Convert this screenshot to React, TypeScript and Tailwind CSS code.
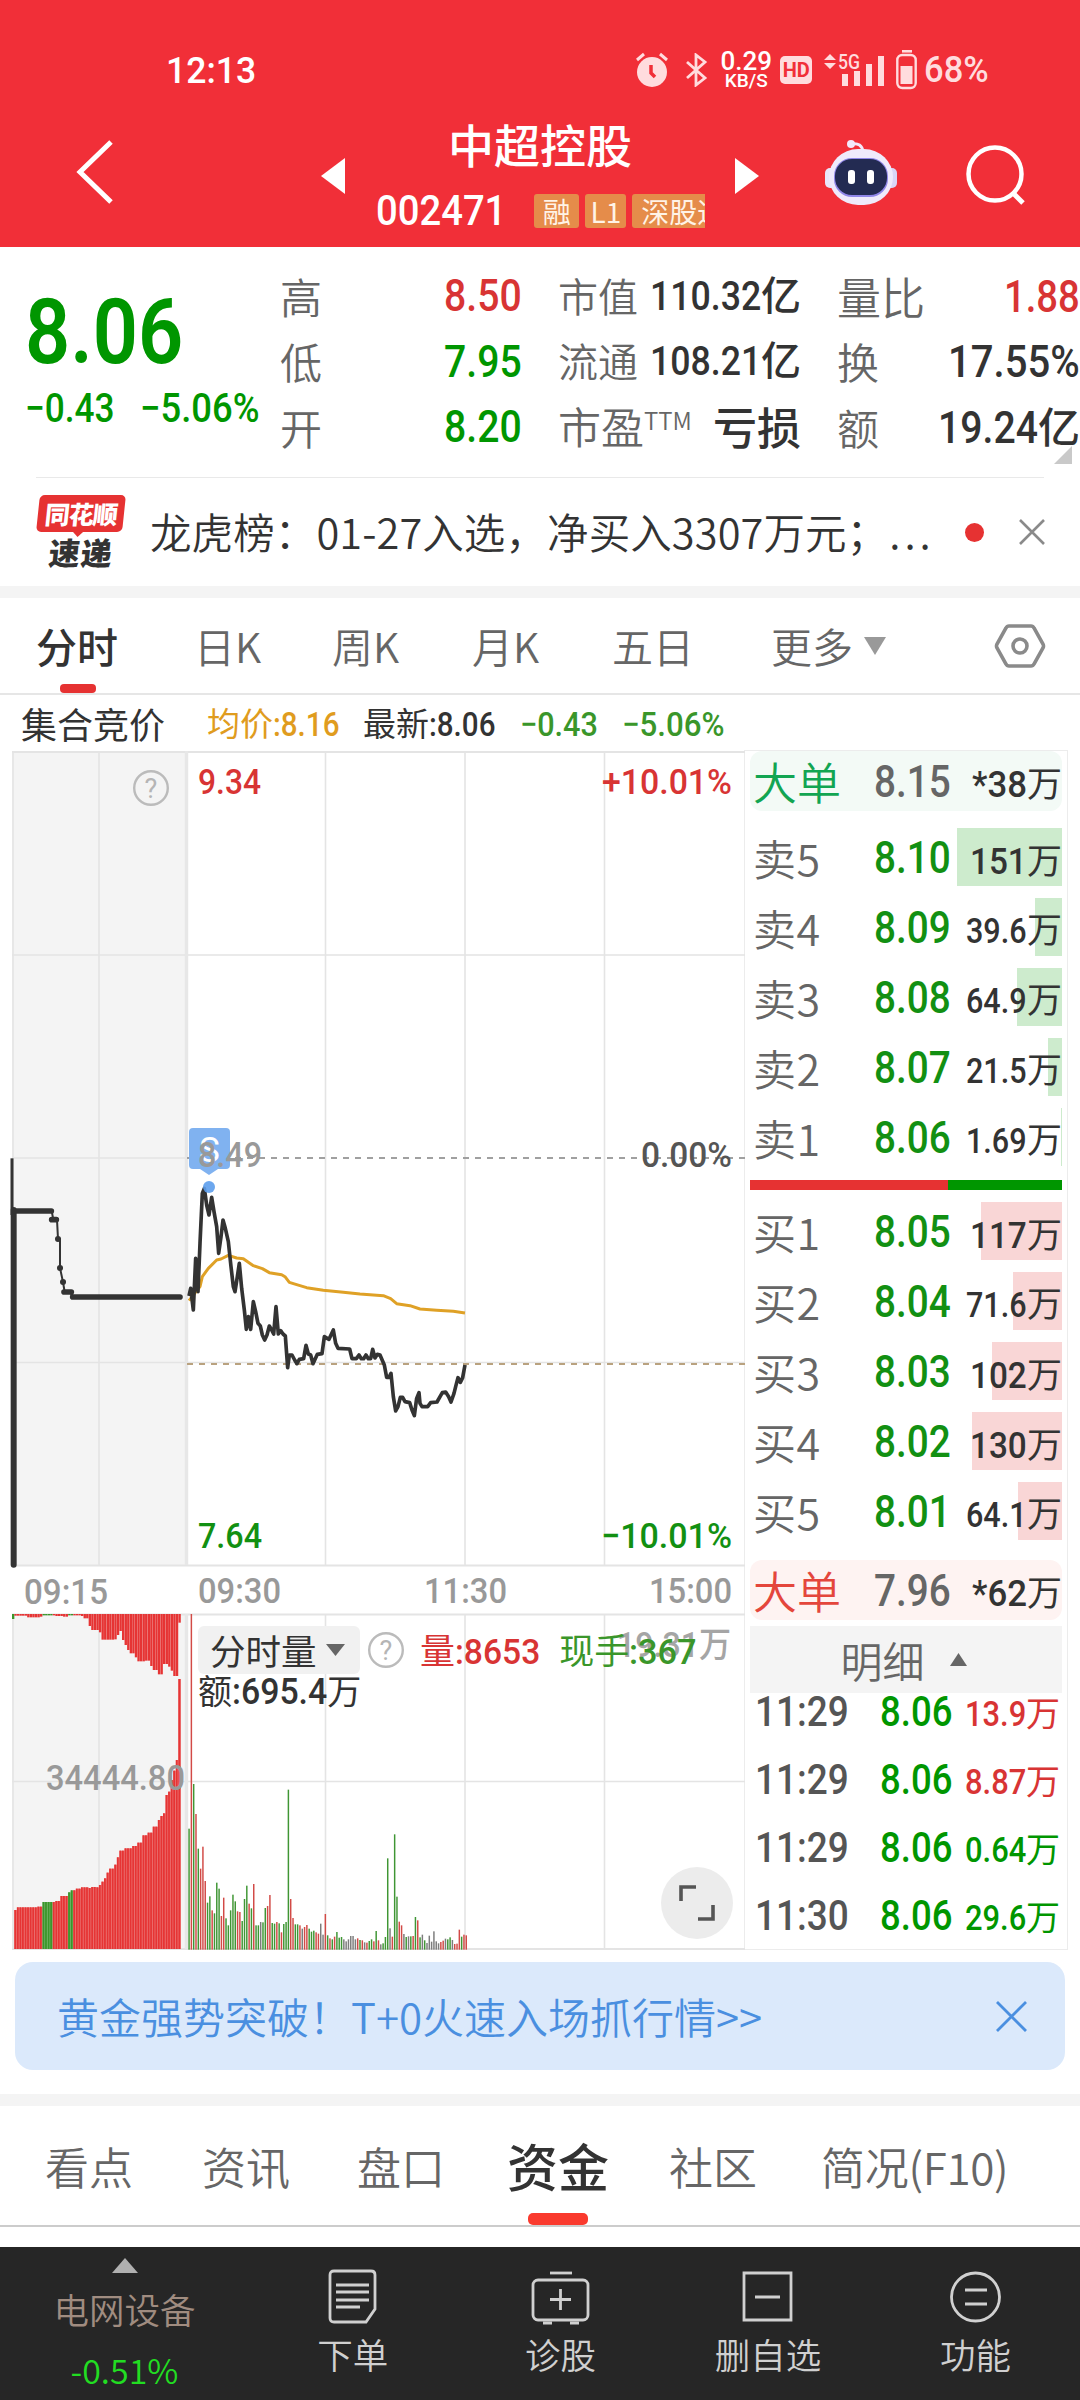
import type { ReactNode } from "react";

const CJK = "font-['Noto_Sans_CJK_SC',sans-serif]";

// Advance widths of Roboto Medium in em, used to close the gap that scaleX leaves behind.
const ADVANCE: Record<string, number> = { ".": 0.28, ":": 0.26, "%": 0.74, "-": 0.33, "*": 0.45, "−": 0.57, "+": 0.56 };

function Num({ children, ratio = 0.87, className = "" }: { children: string; ratio?: number; className?: string }) {
  const width = [...children].reduce((sum, c) => sum + (ADVANCE[c] ?? 0.568), 0);
  return (
    <span
      className={`inline-block origin-left whitespace-nowrap font-['Roboto',sans-serif] font-medium leading-none ${className}`}
      style={{ transform: `scaleX(${ratio})`, marginRight: `${-(1 - ratio) * width}em` }}
    >
      {children}
    </span>
  );
}

export default function App() {
  return (
    <div className={`w-[1080px] h-[2400px] overflow-hidden bg-white text-[#333] flex flex-col ${CJK}`}>
      <Header />
      <Quote />
      <Ticker />
      <div className="h-3 bg-[#f4f4f4] shrink-0" />
      <PeriodTabs />
      <div className="flex h-[1255px] shrink-0">
        <div className="w-[744px] flex flex-col">
          <ChartSummary />
          <Chart />
        </div>
        <OrderBook />
      </div>
      <Promo />
      <div className="h-3 bg-[#f4f4f4] shrink-0" />
      <InfoTabs />
      <BottomNav />
    </div>
  );
}

function Header() {
  return (
    <header className="h-[247px] shrink-0 bg-[#f12f38] text-white flex flex-col">
      <div className="h-[140px] pl-[166px] pr-[91px] flex items-center justify-between">
        <Num ratio={0.96} className="text-[37px]">12:13</Num>
        <StatusIcons />
      </div>
      <div className="h-[107px] flex">
        <div className="w-[321px] pl-[76px] -mt-px">
          <svg width="40" height="66" viewBox="0 0 40 66" fill="none" stroke="#fff" strokeWidth="5">
            <path d="M35 3 4 33l31 30" />
          </svg>
        </div>
        <svg className="w-6 mt-[18px]" height="36" viewBox="0 0 24 36" fill="#fff">
          <path d="M0 18 24 0v36z" />
        </svg>
        <div className="w-[390px] -mt-[24px] flex flex-col">
          <h1 className="h-[54px] text-[46px] leading-[54px] text-center font-medium">中超控股</h1>
          <div className="mt-[24px] pl-[31px] flex items-center h-[34px]">
            <Num ratio={0.91} className="text-[42px]">002471</Num>
            <div className="ml-[28px] flex gap-1.5 w-[171px] h-[34px] overflow-hidden text-[28px] leading-[34px] text-[#fff3e6]">
              <span className="w-[45px] h-[34px] bg-[#e58c4a] rounded-[3px] text-center shrink-0">融</span>
              <span className="w-[41px] h-[34px] bg-[#e58c4a] rounded-[3px] text-center shrink-0">L1</span>
              <span className="w-[110px] h-[34px] bg-[#e58c4a] rounded-[3px] pl-[9px] whitespace-nowrap shrink-0">深股通</span>
            </div>
          </div>
        </div>
        <svg className="w-6 mt-[18px]" height="36" viewBox="0 0 24 36" fill="#fff">
          <path d="M24 18 0 0v36z" />
        </svg>
        <div className="ml-[65px] -mt-[2px]">
          <Robot />
        </div>
        <svg className="ml-[66px] mt-[3px]" width="66" height="66" viewBox="0 0 66 66" fill="none" stroke="#fff" strokeWidth="4.5">
          <circle cx="31" cy="31" r="26.5" />
          <path d="m48 49 11 11" strokeWidth="5" />
        </svg>
      </div>
    </header>
  );
}

function StatusIcons() {
  return (
    <div className="flex items-center text-[#ffdcde]">
      <svg width="34" height="36" viewBox="0 0 34 36" fill="currentColor">
        <path d="M2 8 9 2M32 8l-7-6" stroke="currentColor" strokeWidth="3" />
        <circle cx="17" cy="20" r="15" />
        <path d="M16 13v8l4 4" fill="none" stroke="#f12f38" strokeWidth="3.5" />
      </svg>
      <svg className="ml-4" width="23" height="34" viewBox="0 0 23 34" fill="none" stroke="currentColor" strokeWidth="2.8">
        <path d="M2 9l18 16-9 7V2l9 7L2 25" />
      </svg>
      <div className="ml-3 w-[52px] h-[38px] flex flex-col items-center justify-between text-white">
        <Num ratio={1} className="text-[26px] !leading-5">0.29</Num>
        <Num ratio={1} className="text-[19px] !leading-4">KB/S</Num>
      </div>
      <span className="ml-2 w-8 h-7 rounded-[5px] bg-[#ffdcde] text-[#f12f38] flex justify-center items-center">
        <b className="font-['Roboto',sans-serif] text-[20px] leading-none">HD</b>
      </span>
      <svg className="ml-3" width="62" height="36" viewBox="0 0 62 36" fill="currentColor">
        <path d="M0 8l6-6 6 6zM0 11h12l-6 6z" />
        <text x="14" y="17" fontFamily="Roboto" fontSize="21" fontWeight="500" textLength="22" lengthAdjust="spacingAndGlyphs">5G</text>
        <path d="M18 22h6v12h-6zM30 19h6v15h-6zM42 12h6v22h-6zM54 4h6v30h-6z" />
      </svg>
      <svg className="ml-2.5" width="22" height="40" viewBox="0 0 22 40" fill="currentColor">
        <path d="M6 0h10v2.6H6z" />
        <rect x="1.3" y="5" width="18.4" height="33" rx="5" fill="none" stroke="currentColor" strokeWidth="2.4" />
        <rect x="4.5" y="16" width="12" height="18" />
      </svg>
      <Num ratio={0.96} className="ml-[6px] text-[36px]">68%</Num>
    </div>
  );
}

function Robot() {
  return (
    <svg width="74" height="68" viewBox="0 0 74 68">
      <path d="M27 6q11-2 12 8" fill="none" stroke="#f3e9fb" strokeWidth="3" />
      <circle cx="27" cy="6" r="4" fill="#f3e9fb" />
      <rect x="1" y="30" width="11" height="20" rx="5" fill="#e9e6fa" />
      <rect x="62" y="30" width="11" height="20" rx="5" fill="#d9d5f6" />
      <rect x="5" y="11" width="64" height="56" rx="29" fill="#efeafb" />
      <rect x="10" y="20" width="54" height="39" rx="18" fill="#8f86e8" />
      <rect x="11" y="21" width="52" height="36" rx="17" fill="#232b52" />
      <rect x="24" y="32" width="7" height="14" rx="3" fill="#fff" />
      <rect x="43" y="32" width="7" height="14" rx="3" fill="#fff" />
    </svg>
  );
}

const UP = "text-[#d83434]";
const DOWN = "text-[#009600]";

function Quote() {
  return (
    <section className="h-[231px] shrink-0 flex relative">
      <div className="w-[280px] pl-[25px]">
        <div className={`mt-[39px] h-[92px] flex items-center ${DOWN}`}>
          <Num className="text-[91px] !font-semibold">8.06</Num>
        </div>
        <div className={`mt-[11px] flex gap-[25px] h-10 items-center text-[40px] ${DOWN}`}>
          <Num ratio={0.88}>−0.43</Num>
          <Num ratio={0.91}>−5.06%</Num>
        </div>
      </div>
      <div className="w-[242px] pt-[16px]">
        <Pair label="高"><Num className={`text-[45px] ${UP}`}>8.50</Num></Pair>
        <Pair label="低"><Num className={`text-[45px] ${DOWN}`}>7.95</Num></Pair>
        <Pair label="开"><Num className={`text-[45px] ${DOWN}`}>8.20</Num></Pair>
      </div>
      <div className="ml-[36px] w-[243px] pt-[15px] text-[40px] font-medium">
        <Pair label="市值" size="text-[40px]"><Num className="text-[41px]">110.32</Num>亿</Pair>
        <Pair label="流通" size="text-[40px]"><Num className="text-[41px]">108.21</Num>亿</Pair>
        <Pair
          size="text-[43px]"
          label={<>市盈<sup className="text-[24px] -top-[14px]">TTM</sup></>}
        >
          <span className="text-[44px]">亏损</span>
        </Pair>
      </div>
      <div className="ml-[36px] w-[243px] pt-[16px] text-[42px] font-medium">
        <Pair label="量比" size="text-[44px]"><Num ratio={0.85} className={`text-[45px] ${UP}`}>1.88</Num></Pair>
        <Pair label="换"><Num ratio={0.89} className="text-[45px]">17.55%</Num></Pair>
        <Pair label="额"><Num className="text-[45px]">19.24</Num>亿</Pair>
      </div>
      <svg className="absolute right-2 top-[199px]" width="18" height="18" fill="#c9c9c9">
        <path d="M18 0v18H0z" />
      </svg>
      <div className="absolute left-9 right-9 bottom-0 h-px bg-[#e9e9e9]" />
    </section>
  );
}

function Pair({ label, size = "text-[42px]", children }: { label: ReactNode; size?: string; children: ReactNode }) {
  return (
    <div className="h-[65.5px] flex items-center justify-between leading-none whitespace-nowrap">
      <span className={`${size} font-[350] text-[#666]`}>{label}</span>
      <span>{children}</span>
    </div>
  );
}

function Ticker() {
  return (
    <section className="h-[108px] shrink-0 flex items-center pl-9 pr-9">
      <div className="w-[90px] shrink-0 -mt-[2px] flex flex-col items-center">
        <div className="relative w-[86px] h-[37px] bg-[#e63232] rounded-[5px] -skew-x-6 text-white text-[25px] font-black leading-[36px] text-center tracking-[-1px]">
          同花顺
          <span className="absolute left-[36px] -bottom-[5px] border-x-[6px] border-t-[6px] border-x-transparent border-t-[#e63232]" />
        </div>
        <div className="mt-[5px] -skew-x-6 text-[31px] leading-[30px] font-black tracking-[1px]">速递</div>
      </div>
      <p className="ml-[24px] shrink-0 text-[41.5px] leading-none whitespace-nowrap font-[350] w-[780px] tracking-[0.1px]">
        龙虎榜：01-27入选，净买入3307万元；<span className="ml-px tracking-[4px]">...</span>
      </p>
      <span className="ml-[35px] shrink-0 w-[19px] h-[19px] rounded-full bg-[#e63232]" />
      <svg className="ml-[35px] shrink-0" width="26" height="26" stroke="#8a8a8a" strokeWidth="2.6">
        <path d="M1 1 25 25M25 1 1 25" />
      </svg>
    </section>
  );
}

function PeriodTabs() {
  return (
    <nav className="h-[97px] shrink-0 border-b-2 border-[#e6e6e6] flex items-center text-[41px] leading-none font-[350] text-[#666] whitespace-nowrap relative">
      <span className="w-[194px] pl-[36px] font-medium text-[#333]">分时</span>
      <span className="w-[138px]">日K</span>
      <span className="w-[140px]">周K</span>
      <span className="w-[142px]">月K</span>
      <span className="w-[159px] -ml-[2px]">五日</span>
      <span className="w-[92px]">更多</span>
      <svg width="24" height="20" fill="#999">
        <path d="M1 1h22L12 19z" />
      </svg>
      <svg className="ml-[107px]" width="52" height="48" viewBox="0 0 52 48" fill="none" stroke="#8a8a8a" strokeWidth="3.6">
        <path d="M15 4h22q2 0 3 2l9 16q1 2 0 4l-9 16q-1 2-3 2H15q-2 0-3-2L3 26q-1-2 0-4l9-16q1-2 3-2z" />
        <circle cx="26" cy="24" r="7" />
      </svg>
      <span className="absolute left-[60px] bottom-0 w-9 h-[9px] rounded-[4px] bg-[#e63232]" />
    </nav>
  );
}

function ChartSummary() {
  return (
    <div className="h-[56px] shrink-0 pl-[21px] flex items-center text-[33px] leading-none whitespace-nowrap">
      <span className="w-[186px] text-[36px]">集合竞价</span>
      <span className="w-[156px] text-[#e09c1e]">均价<Num ratio={0.87} className="text-[34px]">:8.16</Num></span>
      <span className="w-[157px]">最新<Num ratio={0.87} className="text-[34px]">:8.06</Num></span>
      <span className="w-[102px] text-[#3a962a]"><Num ratio={0.9} className="text-[34px]">−0.43</Num></span>
      <span className="text-[#3a962a]"><Num ratio={0.92} className="text-[34px]">−5.06%</Num></span>
    </div>
  );
}

const PRICE =
  "567,558 572,535 580,600 587,445 594,545 600,400 607,250 613,235 620,285 627,315 635,262 642,305 650,350 656,430 663,380 669,330 676,355 685,395 693,470 700,530 705,545 712,500 718,460 725,535 733,600 739,658 745,620 752,658 760,575 767,605 774,640 781,648 787,675 794,690 801,675 808,648 815,660 821,672 828,590 835,672 842,662 849,672 856,678 863,773 868,735 876,735 884,750 891,761 898,748 911,746 918,706 925,732 932,735 939,761 952,733 966,731 973,680 987,688 1000,660 1007,700 1014,715 1049,717 1056,746 1069,746 1077,735 1084,746 1091,746 1098,735 1105,746 1112,746 1118,718 1125,744 1132,733 1140,735 1153,765 1160,802 1167,802 1173,790 1180,860 1187,903 1194,890 1201,862 1208,862 1215,875 1229,878 1236,900 1243,917 1250,865 1257,848 1260,880 1266,890 1283,890 1292,878 1311,876 1327,848 1337,846 1346,860 1353,876 1362,850 1367,830 1374,803 1381,817 1388,803 1395,765";
const AVERAGE =
  "567,572 600,530 607,500 625,475 650,450 663,447 685,436 710,444 730,446 760,467 787,476 808,488 845,494 855,500 868,517 890,524 920,533 970,541 1030,547 1080,552 1150,557 1172,566 1190,581 1230,587 1260,597 1310,601 1360,604 1395,609";
const AUCTION =
  "40,303 155,303 160,329 171,329 174,387 180,387 180,474 189,516 194,546 212,546 216,561 543,561";

// One bar per minute: colour (g down, r up, x flat) and the top of the bar, in thirds of a pixel.
const VOLUME =
  "g686 r42 g552 r642 g746 r806 r740 r843 g908 g889 r931 g940 g848 g866 r948 r893 g955 g976 g931 g884 g904 r934 r936 g963 g897 g857 r911 g925 r852 g976 g976 x966 g967 g924 r918 r885 g969 g971 r966 g970 r997 g972 g966 g569 r897 r954 g973 g973 r976 x986 r981 r975 g986 g995 g992 r997 r1001 x971 x1004 r942 g1006 r1015 g1018 r1010 g996 g1013 g1011 x1018 x1024 x1018 x1008 x1008 x1018 r1015 g1020 r1021 x1027 r1028 g1023 g1018 r1024 g993 r1021 x1033 g1030 g1011 g775 x985 r1010 g703 g890 r965 r976 x1002 g1011 x1009 g1009 r1008 g951 r961 g1012 x1004 g1021 x1029 x1007 x1025 x994 x1024 x1030 r1026 r1022 x1016 g1018 g1012 x1020 r1032 r1031 r989 g1010 r1004 r1006".split(" ");
const VOLUME_FILL: Record<string, string> = { g: "#3f9634", r: "#d24a46", x: "#7c7c7c" };

// Auction matched volume (rises from the bottom) and unmatched volume (hangs from the top).
const MATCHED = [
  [43, 930], [50, 922], [108, 920], [126, 906], [165, 903], [180, 888], [200, 877], [210, 871], [222, 866], [240, 862],
  [262, 864], [270, 861], [283, 862], [297, 855], [305, 845], [312, 835], [318, 818], [325, 806], [340, 794], [348, 772],
  [356, 752], [370, 745], [395, 738], [410, 728], [423, 706], [440, 698], [455, 680], [470, 660], [478, 648], [488, 640],
  [492, 585], [503, 575], [510, 540], [520, 512], [528, 480], [533, 237],
];
const UNMATCHED = [
  [43, 47], [80, 52], [120, 50], [126, 46], [160, 48], [190, 50], [200, 46], [240, 48], [250, 55], [260, 78],
  [270, 90], [295, 97], [302, 119], [343, 118], [349, 105], [355, 93], [363, 120], [372, 135], [380, 150], [390, 160],
  [400, 172], [410, 184], [435, 182], [445, 198], [455, 210], [470, 223], [485, 228], [490, 192], [500, 200],
  [508, 212], [514, 228], [530, 240],
];

function levelAt(steps: number[][], x: number) {
  let level = steps[0][1];
  for (const [from, value] of steps) if (from <= x + 1) level = value;
  return level;
}

function Label({ x, y, w, fill, children, size = 35.5 }: { x: number; y: number; w: number; fill: string; children: string; size?: number }) {
  return (
    <text x={x} y={y} fill={fill} fontSize={size} fontWeight={500} fontFamily="Roboto, 'Noto Sans CJK SC', sans-serif" textLength={w} lengthAdjust="spacingAndGlyphs">
      {children}
    </text>
  );
}

function Help({ cx, cy }: { cx: number; cy: number }) {
  return (
    <g>
      <circle cx={cx} cy={cy} r="16.8" fill="none" stroke="#bbb" strokeWidth="2.4" />
      <text x={cx} y={cy + 9.5} textAnchor="middle" fontFamily="Roboto" fontSize="27" fill="#b5b5b5">?</text>
    </g>
  );
}

function Chart() {
  const auctionBars = Array.from({ length: 65 }, (_, i) => 43 + i * 7.69);
  return (
    <div className="relative h-[1199px]">
      <svg width="745" height="1200" viewBox="0 751 745 1200" className="block max-w-none overflow-visible">
        <path d="M12 751h175v814H12zM12 1614h175v335H12z" fill="#f4f4f4" />
        <g stroke="#e4e4e4" strokeWidth="1.6" fill="none">
          <path d="M12 752h733M12 1565.5h733M12 1614.5h733M12 1949h733" strokeWidth="2" />
          <path d="M12 955h733M12 1158h175M12 1362.5h733M12 1781.5h733" />
          <path d="M13 751v814M99 751v814M325.5 751v814M465 751v814M604.5 751v814" />
          <path d="M13 1614v335M99 1614v335M325.5 1614v335M465 1614v335M604.5 1614v335" />
          <path d="M186.5 751v814M186.5 1614v335" strokeWidth="3.4" stroke="#e7e7e7" />
        </g>
        <g strokeWidth="2" strokeDasharray="6 6" fill="none">
          <path d="M187 1158h558" stroke="#a0a0a0" />
          <path d="M187 1364h558" stroke="#b9a27f" />
        </g>

        <g transform="translate(0 1110) scale(.33333)" fill="none" strokeLinejoin="round">
          <path d="M36 145v170" stroke="#333" strokeWidth="9" />
          <path d="M41 300v1064" stroke="#333" strokeWidth="18" strokeLinecap="round" />
          <polyline points={AUCTION} stroke="#333" strokeWidth="6" />
          <path d="M46 303h108M155 329h14M218 561h322M192 546h22" stroke="#333" strokeWidth="17" strokeLinecap="round" />
          <path d="M174 387h.1M180 474h.1M189 516h.1" stroke="#333" strokeWidth="18" strokeLinecap="round" />
          <polyline points={AVERAGE} stroke="#dfa126" strokeWidth="9" />
          <polyline points={PRICE} stroke="#333" strokeWidth="11" />
        </g>

        <g transform="translate(0 1600) scale(.33333)">
          <rect x="36" y="42" width="7" height="15" fill="#3a962a" />
          {auctionBars.map((x, i) => {
            const fill = (i > 10 && i < 15) || i === 21 || i === 22 ? "#3a962a" : "#e63434";
            const top = levelAt(MATCHED, x);
            return (
              <g key={i} fill={fill}>
                <rect x={x} y={top} width="7.69" height={1047 - top} opacity=".72" />
                <rect x={x} y={top} width="5.2" height={1047 - top} />
                <rect x={x} y="42" width="7.2" height={(i === 64 ? 68 : levelAt(UNMATCHED, x)) - 42} />
              </g>
            );
          })}
          {VOLUME.map((bar, i) => {
            const top = Number(bar.slice(1));
            return <rect key={i} x={565 + i * 6.93} y={top} width="4.4" height={1049 - top} fill={VOLUME_FILL[bar[0]]} />;
          })}
        </g>

        <rect x="189" y="1128" width="41" height="41" rx="4" fill="#80b2f0" />
        <path d="M200 1169h18l-9 6z" fill="#80b2f0" />
        <text x="209.500" y="1162" textAnchor="middle" fontFamily="Roboto" fontSize="35" fill="#fff">S</text>
        <circle cx="209" cy="1187" r="6" fill="#5c9dec" fillOpacity=".9" />

        <Help cx={151} cy={788} />
        <Label x={198} y={794} w={63} fill="#d83434">9.34</Label>
        <Label x={602} y={794} w={130} fill="#d83434">+10.01%</Label>
        <Label x={198} y={1167} w={64} fill="#999">8.49</Label>
        <Label x={641} y={1167} w={91} fill="#555">0.00%</Label>
        <Label x={198} y={1548} w={64} fill="#129012">7.64</Label>
        <Label x={601} y={1548} w={131} fill="#129012">−10.01%</Label>
        <Label x={24} y={1604} w={84} fill="#999">09:15</Label>
        <Label x={198} y={1603} w={83} fill="#999">09:30</Label>
        <Label x={424} y={1603} w={83} fill="#999">11:30</Label>
        <Label x={649} y={1603} w={83} fill="#999">15:00</Label>
        <Label x={46} y={1790} w={139} fill="#999">34444.80</Label>
        <Label x={617} y={1657} w={114} fill="#a5a5a5" size={35}>19.31万</Label>
        <Help cx={386} cy={1650} />
      </svg>
      <div className="absolute left-[198px] top-[875px] w-[162px] h-12 rounded-[6px] bg-[#f1f1f1] pl-[12px] flex items-center text-[35.5px] leading-none whitespace-nowrap">
        分时量
        <svg className="ml-[9px]" width="19" height="14" fill="#666">
          <path d="M0 1h19L9.500 13z" />
        </svg>
      </div>
      <div className="absolute left-[420px] top-[875px] h-12 flex items-center gap-[19px] text-[35px] leading-none whitespace-nowrap">
        <span className={UP}>量<Num ratio={0.96}>:8653</Num></span>
        <span className="text-[#3a962a]">现手<Num ratio={0.98}>:367</Num></span>
      </div>
      <div className="absolute left-[198px] top-[920px] h-10 flex items-center text-[34px] leading-none whitespace-nowrap">
        <span>额<Num ratio={0.94} className="text-[36px]">:695.4</Num>万</span>
      </div>
      <div className="absolute left-[661px] top-[1116px] w-[72px] h-[72px] rounded-full bg-[#ececec] flex items-center justify-center">
        <svg width="38" height="38" fill="none" stroke="#555" strokeWidth="3.6">
          <path d="M3 17V3h15M35 21v14H20" />
        </svg>
      </div>
    </div>
  );
}

const ASKS = [
  { label: "卖5", price: "8.10", qty: "151", bar: 105 },
  { label: "卖4", price: "8.09", qty: "39.6", bar: 27 },
  { label: "卖3", price: "8.08", qty: "64.9", bar: 45 },
  { label: "卖2", price: "8.07", qty: "21.5", bar: 14 },
  { label: "卖1", price: "8.06", qty: "1.69", bar: 1 },
];
const BIDS = [
  { label: "买1", price: "8.05", qty: "117", bar: 81 },
  { label: "买2", price: "8.04", qty: "71.6", bar: 49 },
  { label: "买3", price: "8.03", qty: "102", bar: 70 },
  { label: "买4", price: "8.02", qty: "130", bar: 90 },
  { label: "买5", price: "8.01", qty: "64.1", bar: 44 },
];
const TRADES = [
  { time: "11:29", qty: "13.9", color: UP },
  { time: "11:29", qty: "8.87", color: UP },
  { time: "11:29", qty: "0.64", color: DOWN },
  { time: "11:30", qty: "29.6", color: DOWN },
];

function OrderBook() {
  return (
    <aside className="mt-[55px] w-[324px] h-[1200px] border border-[#ececec] pl-[5px] pr-[5px] flex flex-col">
      <BigOrder price="8.15" qty="*38" className="bg-[#f3faf6]" labelClass="text-[#12a552]" />
      <div className="mt-[17px] flex flex-col gap-3">
        {ASKS.map((row) => <Level key={row.label} {...row} barClass="bg-[#cdebcd]" />)}
      </div>
      <div className="mt-[14px] h-2.5 shrink-0 flex">
        <div className="w-[198px] bg-[#e63232]" />
        <div className="flex-1 bg-[#009600]" />
      </div>
      <div className="mt-3 flex flex-col gap-3">
        {BIDS.map((row) => <Level key={row.label} {...row} barClass="bg-[#f9d6d6]" />)}
      </div>
      <BigOrder price="7.96" qty="*62" className="mt-[20px] bg-[#fef3f2]" labelClass="text-[#e4463c]" />
      <div className="mt-[6px] h-[67px] shrink-0 bg-[#f4f4f4] flex items-center justify-center pr-[5px] text-[42px] leading-none font-[350] text-[#666]">
        明细
        <svg className="ml-[25px]" width="17" height="13" fill="#666">
          <path d="M0 13h17L8.500 0z" />
        </svg>
      </div>
      <div className="-mt-[15px] flex flex-col">
        {TRADES.map((row, i) => (
          <div key={i} className="h-[68px] pl-[5px] pr-[2px] flex items-center leading-none whitespace-nowrap">
            <span className="w-[125px] text-[#555]"><Num ratio={0.88} className="text-[42px]">{row.time}</Num></span>
            <span className={DOWN}><Num className="text-[42px]">8.06</Num></span>
            <span className={`ml-auto pt-[3px] text-[34px] ${row.color}`}><Num ratio={0.87} className="text-[35.5px]">{row.qty}</Num>万</span>
          </div>
        ))}
      </div>
    </aside>
  );
}

function BigOrder({ price, qty, className, labelClass }: { price: string; qty: string; className: string; labelClass: string }) {
  return (
    <div className={`h-[60px] shrink-0 rounded-[12px] pl-[3px] flex items-center leading-none whitespace-nowrap ${className}`}>
      <span className={`w-[121px] text-[44px] font-[350] ${labelClass}`}>大单</span>
      <Num ratio={0.86} className="text-[45px] text-[#666]">{price}</Num>
      <span className="ml-auto pt-[4px] text-[35px]"><Num ratio={0.94} className="text-[37px]">{qty}</Num>万</span>
    </div>
  );
}

function Level({ label, price, qty, bar, barClass }: { label: string; price: string; qty: string; bar: number; barClass: string }) {
  const fraction = qty.includes(".");
  return (
    <div className="relative h-[58px] pl-[3px] flex items-center leading-none whitespace-nowrap">
      <div className={`absolute right-0 top-0 h-full ${barClass}`} style={{ width: bar }} />
      <span className="w-[121px] text-[43px] font-[350] tracking-[0.5px] text-[#666]">{label}</span>
      <Num ratio={0.86} className="text-[45px] text-[#129012]">{price}</Num>
      <span className="relative ml-auto pt-[6px] text-[35px]">
        <Num ratio={fraction ? 0.86 : 0.9} className={fraction ? "text-[35.5px]" : "text-[37px]"}>{qty}</Num>万
      </span>
    </div>
  );
}

function Promo() {
  return (
    <section className="h-[144px] shrink-0 pt-3 px-[15px]">
      <div className="h-[108px] rounded-[18px] bg-[#dbe9fb] pl-[42px] pr-[38px] flex items-center justify-between text-[#4a8fe0]">
        <span className="text-[42px] leading-none font-[350] whitespace-nowrap">黄金强势突破！T+0火速入场抓行情&gt;&gt;</span>
        <svg width="31" height="31" stroke="currentColor" strokeWidth="2.8">
          <path d="M1 1 30 30M30 1 1 30" />
        </svg>
      </div>
    </section>
  );
}

function InfoTabs() {
  return (
    <nav className="h-[121px] shrink-0 border-b-2 border-[#ccc] pl-[45px] flex items-center text-[44px] leading-none font-[350] text-[#666] whitespace-nowrap relative">
      <span className="w-[157px]">看点</span>
      <span className="w-[155px]">资讯</span>
      <span className="w-[150px]">盘口</span>
      <span className="w-[162px] text-[51px] font-medium text-[#333]">资金</span>
      <span className="w-[152px]">社区</span>
      <span className="tracking-[-0.3px]">简况(F10)</span>
      <span className="absolute left-[528px] bottom-0 w-[60px] h-3 rounded-[5px] bg-[#fa3a2e]" />
    </nav>
  );
}

function BottomNav() {
  return (
    <footer className="mt-5 h-[153px] shrink-0 bg-[#262626] text-[#d0d0d0] flex">
      <div className="w-[249px] flex flex-col items-center leading-none">
        <svg className="mt-[11px]" width="26" height="15" fill="#b0b0b0">
          <path d="M0 15h26L13 0z" />
        </svg>
        <span className="mt-[18px] text-[35.5px] text-[#a08c80] font-[350]">电网设备</span>
        <span className="mt-[26px] text-[34px] text-[#22dd22] font-[350]">-0.51%</span>
      </div>
      <NavItem label="下单">
        <path d="M3 6q0-4 4-4h37q4 0 4 4v34l-9 13H7q-4 0-4-4z" />
        <path d="M9 16h33M9 23h33M9 31h33M9 38h24" />
      </NavItem>
      <NavItem label="诊股">
        <path d="M15 4h22" />
        <rect x="-2" y="11" width="55" height="40" rx="5" />
        <path d="M25.500 20v21M15 30.500h21M8 54h9M35 54h9" />
      </NavItem>
      <NavItem label="删自选">
        <path d="M2 4h47v47H2zM13 28h25" />
      </NavItem>
      <NavItem label="功能">
        <circle cx="25.500" cy="28" r="24" />
        <path d="M15 21h22M15 35h22" />
      </NavItem>
    </footer>
  );
}

function NavItem({ label, children }: { label: string; children: ReactNode }) {
  return (
    <div className="w-[207.6px] flex flex-col items-center">
      <svg className="mt-[22px] overflow-visible" width="51" height="56" viewBox="0 0 51 56" fill="none" stroke="#d0d0d0" strokeWidth="2.8">
        {children}
      </svg>
      <span className="mt-[11px] text-[35.5px] leading-none font-[350]">{label}</span>
    </div>
  );
}
